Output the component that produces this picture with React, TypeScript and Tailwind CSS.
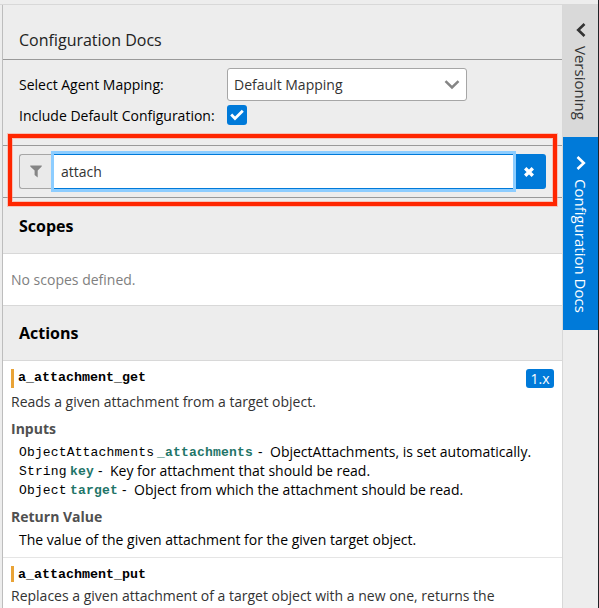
import type { ReactNode } from "react";

const SANS = "font-['Open_Sans','Noto_Sans',sans-serif]";
const CODE = "font-['Courier_New','Liberation_Mono',monospace]";

function SectionHeading({ children, className }: { children: ReactNode; className: string }) {
  return (
    <h2 className={`flex items-center border-b border-[#d8d8d8] bg-[#ededed] pl-4 text-[16px] font-bold text-black ${className}`}>
      <span className="w-max">{children}</span>
    </h2>
  );
}

function Param({ type, name, typeWidth, nameWidth, children }: { type: string; name: string; typeWidth: string; nameWidth: string; children: ReactNode }) {
  return (
    <li className="flex h-[19px] items-center whitespace-pre text-black">
      <span className={`${CODE} ${typeWidth} pt-0.5 text-[13px] tracking-[0.15px]`}>{type}</span>
      <span className={`${CODE} ${nameWidth} pt-0.5 text-[13px] font-bold tracking-[0.2px] text-[#1f7568]`}>{name}</span>
      <span className="w-[12px]">-</span>
      <span>{children}</span>
    </li>
  );
}

function SideTab({ label, active, className }: { label: string; active?: boolean; className: string }) {
  return (
    <button className={`flex w-[35px] flex-col items-center ${active ? "bg-[#007ad9] text-white" : "bg-[#d9d9d9] text-[#333]"} ${className}`}>
      <svg width="10" height="14" viewBox="0 0 10 14" fill="none" stroke="currentColor" strokeWidth="2.6" className="shrink-0">
        <path d={active ? "M1.5 1L7.8 7L1.5 13" : "M8.5 1L2.2 7L8.5 13"} />
      </svg>
      <span className="mt-[9px] ml-px whitespace-nowrap text-[15px] leading-[20px] [writing-mode:vertical-rl]">{label}</span>
    </button>
  );
}

export default function App() {
  return (
    <div className={`flex h-[608px] w-[599px] overflow-hidden border-r border-[#202226] bg-[#ededed] text-[14px] ${SANS}`}>
      <div className="flex w-[598px] shrink-0 flex-col">
        <div className="h-[5px] shrink-0 border-b border-[#d8d8d8]" />
        <div className="flex h-[603px]">
          <main className="relative ml-[2px] w-[561px] border-x border-l-[#bdbdbd] border-r-[#d8d8d8] bg-[#ededed]">
            <h1 className="flex h-[55px] items-end border-b border-[#999] pb-[7px] pl-4 text-[16px] leading-6 text-[#222]">Configuration Docs</h1>
            <section className="flex h-[85px] flex-col pl-4 text-black">
              <div className="mt-2 flex h-[33px] items-center">
                <label className="w-[208px]">Select Agent Mapping:</label>
                <div className="flex h-[33px] w-[240px] items-center justify-between rounded-[3px] border border-[#a6a6a6] bg-white pr-[6px] pl-[6px] text-[#333]">
                  <span>Default Mapping</span>
                  <svg width="16" height="10" viewBox="0 0 16 10" fill="none" stroke="#858585" strokeWidth="2.5"><path d="M1.5 1.2L8 7.5L14.5 1.2" /></svg>
                </div>
              </div>
              <div className="mt-1 flex h-5 items-center">
                <label className="w-[208px]">Include Default Configuration:</label>
                <span className="flex h-5 w-5 items-center justify-center rounded-[3px] bg-[#007ad9]">
                  <svg width="14" height="12" viewBox="0 0 14 12" fill="none" stroke="white" strokeWidth="2.8"><path d="M1.2 5.5L5 9.5L12.8 1.8" /></svg>
                </span>
              </div>
            </section>
            <section className="flex h-[53px] items-center border-y border-[#999] px-4">
              <div className="flex h-[35px] w-[35px] items-center justify-center rounded-l-[3px] border border-r-0 border-[#a6a6a6] bg-[#eaeaea] pr-[2px]">
                <svg width="12" height="13" viewBox="0 0 12 13" fill="#858585"><path d="M.3 .5H11.7Q12 1 11.5 1.7L7.7 5.6V12.5L4.6 10V5.6L.5 1.7Q0 1 .3 .5Z" /></svg>
              </div>
              <div className="relative z-10 flex h-[35px] w-[459px] items-center border-y border-[#007ad9] bg-white pl-[7px] text-[#333] shadow-[0_0_0_3px_#8dcdff]">attach</div>
              <button className="flex h-[35px] w-[33px] items-center justify-center rounded-r-[3px] bg-[#007ad9] pr-px">
                <svg width="10" height="10" viewBox="0 0 10 10" stroke="white" strokeWidth="3.4"><path d="M1.2 1.2L8.8 8.8M8.8 1.2L1.2 8.8" /></svg>
              </button>
            </section>
            <SectionHeading className="h-[56px]">Scopes</SectionHeading>
            <p className="flex h-[52px] items-center border-b border-[#d8d8d8] bg-white pl-2 text-[#808080]">No scopes defined.</p>
            <SectionHeading className="h-[55px]">Actions</SectionHeading>
            <article className="h-[197px] border-b border-[#e5e5e5] bg-white px-2 pt-2 text-[#333]">
              <div className="flex h-[19px] items-start justify-between">
                <h3 className={`h-[19px] border-l-[3px] border-[#e9a336] pl-1 text-[13.33px] leading-[17px] font-bold text-black ${CODE}`}>a_attachment_get</h3>
                <span className="flex h-[19px] w-7 items-center justify-center rounded-[3px] bg-[#007ad9] text-[14px] text-white">1.x</span>
              </div>
              <p className="mt-1 h-5 leading-5">Reads a given attachment from a target object.</p>
              <h4 className="mt-[7px] h-5 leading-5 font-bold text-[#505050]">Inputs</h4>
              <ul className="mt-[3px] pb-px pl-2">
                <Param type="ObjectAttachments" name="_attachments" typeWidth="w-[138px]" nameWidth="w-[101px]">ObjectAttachments, is set automatically.</Param>
                <Param type="String" name="key" typeWidth="w-[51px]" nameWidth="w-[28px]">Key for attachment that should be read.</Param>
                <Param type="Object" name="target" typeWidth="w-[51px]" nameWidth="w-[52px]">Object from which the attachment should be read.</Param>
              </ul>
              <h4 className="mt-[7px] h-5 leading-5 font-bold text-[#505050]">Return Value</h4>
              <p className="mt-[3px] h-5 pl-2 leading-5 text-black">The value of the given attachment for the given target object.</p>
            </article>
            <article className="h-[50px] bg-white px-2 pt-2 text-[#333]">
              <h3 className={`h-4 border-l-[3px] border-[#e9a336] pl-1 text-[13.33px] leading-[17px] font-bold text-black ${CODE}`}>a_attachment_put</h3>
              <p className="mt-1 h-5 leading-5">Replaces a given attachment of a target object with a new one, returns the</p>
            </article>
            <div className="pointer-events-none absolute top-[129px] left-[5px] z-20 h-[72px] w-[549px] border-4 border-[#ff2600] shadow-[0_0_0_1px_#ff988880,inset_0_0_0_1px_#ff988880]" />
          </main>
          <nav className="flex w-[35px] flex-col">
            <SideTab label="Versioning" className="h-[132px] pt-[18px]" />
            <SideTab label="Configuration Docs" active className="h-[193px] pt-[19px]" />
          </nav>
        </div>
      </div>
    </div>
  );
}
